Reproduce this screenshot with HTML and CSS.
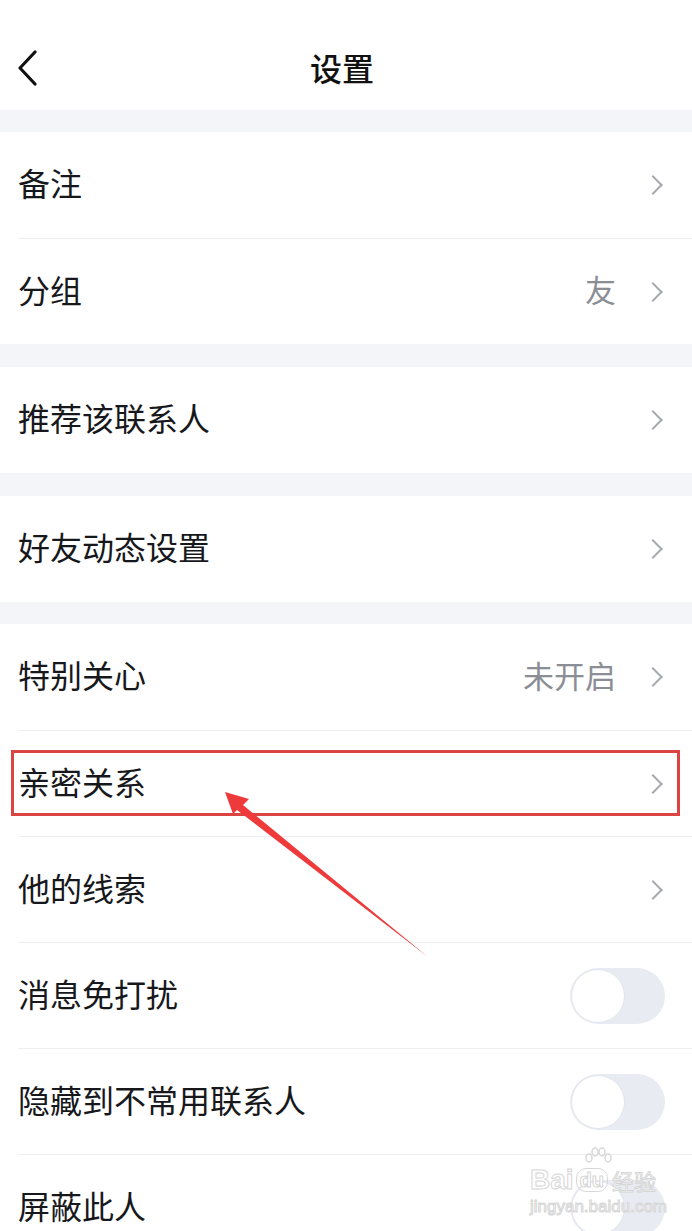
FILE: index.html
```html
<html lang="zh-CN">
<head>
    <meta charset="UTF-8">
    <meta name="viewport" content="width=device-width, initial-scale=1.0">
    <title>设置</title>
    <link rel="stylesheet" href="styles.css">
</head>
<body>
    <div class="page">
        <div class="header">
            <svg class="back" width="24" height="36" viewBox="0 0 24 36">
                <path d="M19 2 L4 18 L19 34" fill="none" stroke="#111" stroke-width="3.2" stroke-linecap="round" stroke-linejoin="round"/>
            </svg>
            <div class="title">设置</div>
        </div>

        <div class="group">
            <div class="row">
                <span class="label">备注</span>
                <span class="right"><i class="chev"></i></span>
            </div>
            <div class="row">
                <span class="label">分组</span>
                <span class="right"><span class="value">友</span><i class="chev"></i></span>
            </div>
        </div>

        <div class="group">
            <div class="row">
                <span class="label">推荐该联系人</span>
                <span class="right"><i class="chev"></i></span>
            </div>
        </div>

        <div class="group short_gap">
            <div class="row">
                <span class="label">好友动态设置</span>
                <span class="right"><i class="chev"></i></span>
            </div>
        </div>

        <div class="group">
            <div class="row">
                <span class="label">特别关心</span>
                <span class="right"><span class="value">未开启</span><i class="chev"></i></span>
            </div>
            <div class="row">
                <span class="label">亲密关系</span>
                <span class="right"><i class="chev"></i></span>
            </div>
            <div class="row">
                <span class="label">他的线索</span>
                <span class="right"><i class="chev"></i></span>
            </div>
            <div class="row">
                <span class="label">消息免打扰</span>
                <span class="right"><span class="switch"><span class="knob"></span></span></span>
            </div>
            <div class="row">
                <span class="label">隐藏到不常用联系人</span>
                <span class="right"><span class="switch"><span class="knob"></span></span></span>
            </div>
            <div class="row">
                <span class="label">屏蔽此人</span>
                <span class="right"><span class="switch"><span class="knob"></span></span></span>
            </div>
        </div>

        <!-- annotation overlay -->
        <div class="mark_box"></div>
        <svg class="mark_arrow" width="692" height="1231" viewBox="0 0 692 1231">
            <polygon points="225,792 249,799 243,805 428,957 237,810 233,814" fill="#ee3a3a"/>
        </svg>

        <div class="watermark">
            <div class="wm_top">
                <span>Bai</span>
                <span class="wm_du">
                    <svg class="wm_paw" width="30" height="22" viewBox="0 0 30 22">
                        <g fill="none" stroke="#d8d8d8" stroke-width="1.5">
                            <ellipse cx="6" cy="11" rx="3" ry="4"/>
                            <ellipse cx="12" cy="5" rx="3" ry="4"/>
                            <ellipse cx="19" cy="5" rx="3" ry="4"/>
                            <ellipse cx="25" cy="11" rx="3" ry="4"/>
                        </g>
                    </svg>
                    du
                </span>
                <span class="wm_cn">经验</span>
            </div>
            <div class="wm_bottom">jingyan.baidu.com</div>
        </div>
    </div>
</body>
</html>
```

FILE: styles.css
```css
body {
    margin: 0;
    background-color: #f4f5f8;
    font-family: "Noto Sans CJK SC", "Noto Sans", sans-serif;
    overflow: hidden;
}
.page {
    position: relative;
    width: 692px;
    height: 1231px;
    overflow: hidden;
}
.header {
    height: 110px;
    background-color: #fff;
    display: flex;
    align-items: center;
    justify-content: center;
    position: relative;
    margin-bottom: 22px;
}
.header .back {
    position: absolute;
    left: 16px;
    top: 50px;
}
.header .title {
    font-size: 32px;
    font-weight: 500;
    color: #111;
    margin-top: 24px;
    margin-right: 8px;
}
.group {
    background-color: #fff;
    padding-left: 18px;
    margin-bottom: 23px;
}
.group.short_gap {
    margin-bottom: 22px;
}
.row {
    height: 105px;
    display: flex;
    align-items: center;
    justify-content: space-between;
    padding-right: 28px;
    border-top: 1px solid #eeeff2;
}
.row:first-child {
    border-top: none;
    height: 106px;
}
.label {
    font-size: 32px;
    color: #17181c;
    margin-bottom: 6px;
}
.right {
    display: flex;
    align-items: center;
}
.value {
    font-size: 31px;
    color: #8b8e95;
    margin-right: 30px;
    margin-bottom: 6px;
}
.chev {
    display: block;
    width: 12px;
    height: 12px;
    border-top: 2.5px solid #a7aab0;
    border-right: 2.5px solid #a7aab0;
    transform: rotate(45deg);
    margin-right: 4px;
}
.switch {
    width: 95px;
    height: 56px;
    border-radius: 28px;
    background-color: #e9ebf2;
    display: flex;
    align-items: center;
    margin-right: -1px;
}
.switch .knob {
    width: 52px;
    height: 52px;
    border-radius: 50%;
    background-color: #fff;
    border: 1px solid #e3e5ec;
    margin-left: 1px;
}
.mark_box {
    position: absolute;
    left: 11px;
    top: 750px;
    width: 663px;
    height: 60px;
    border: 3px solid #dc4343;
}
.mark_arrow {
    position: absolute;
    left: 0;
    top: 0;
}
.watermark {
    position: absolute;
    left: 530px;
    top: 1166px;
    color: #fff;
    font-family: "Liberation Sans", sans-serif;
    -webkit-text-stroke: 1px #d6d6d6;
}
.wm_top {
    display: flex;
    align-items: flex-end;
    font-size: 28px;
    font-weight: bold;
    line-height: 28px;
}
.wm_du {
    position: relative;
    font-size: 20px;
    line-height: 22px;
    border: 1.5px solid #d8d8d8;
    border-radius: 10px;
    padding: 0 3px;
    margin: 0 4px 2px 2px;
}
.wm_paw {
    position: absolute;
    left: 6px;
    top: -22px;
}
.wm_cn {
    font-family: "Noto Sans CJK SC", sans-serif;
    font-size: 22px;
    font-weight: normal;
}
.wm_bottom {
    font-size: 17px;
    line-height: 22px;
    margin-top: 2px;
}
```
